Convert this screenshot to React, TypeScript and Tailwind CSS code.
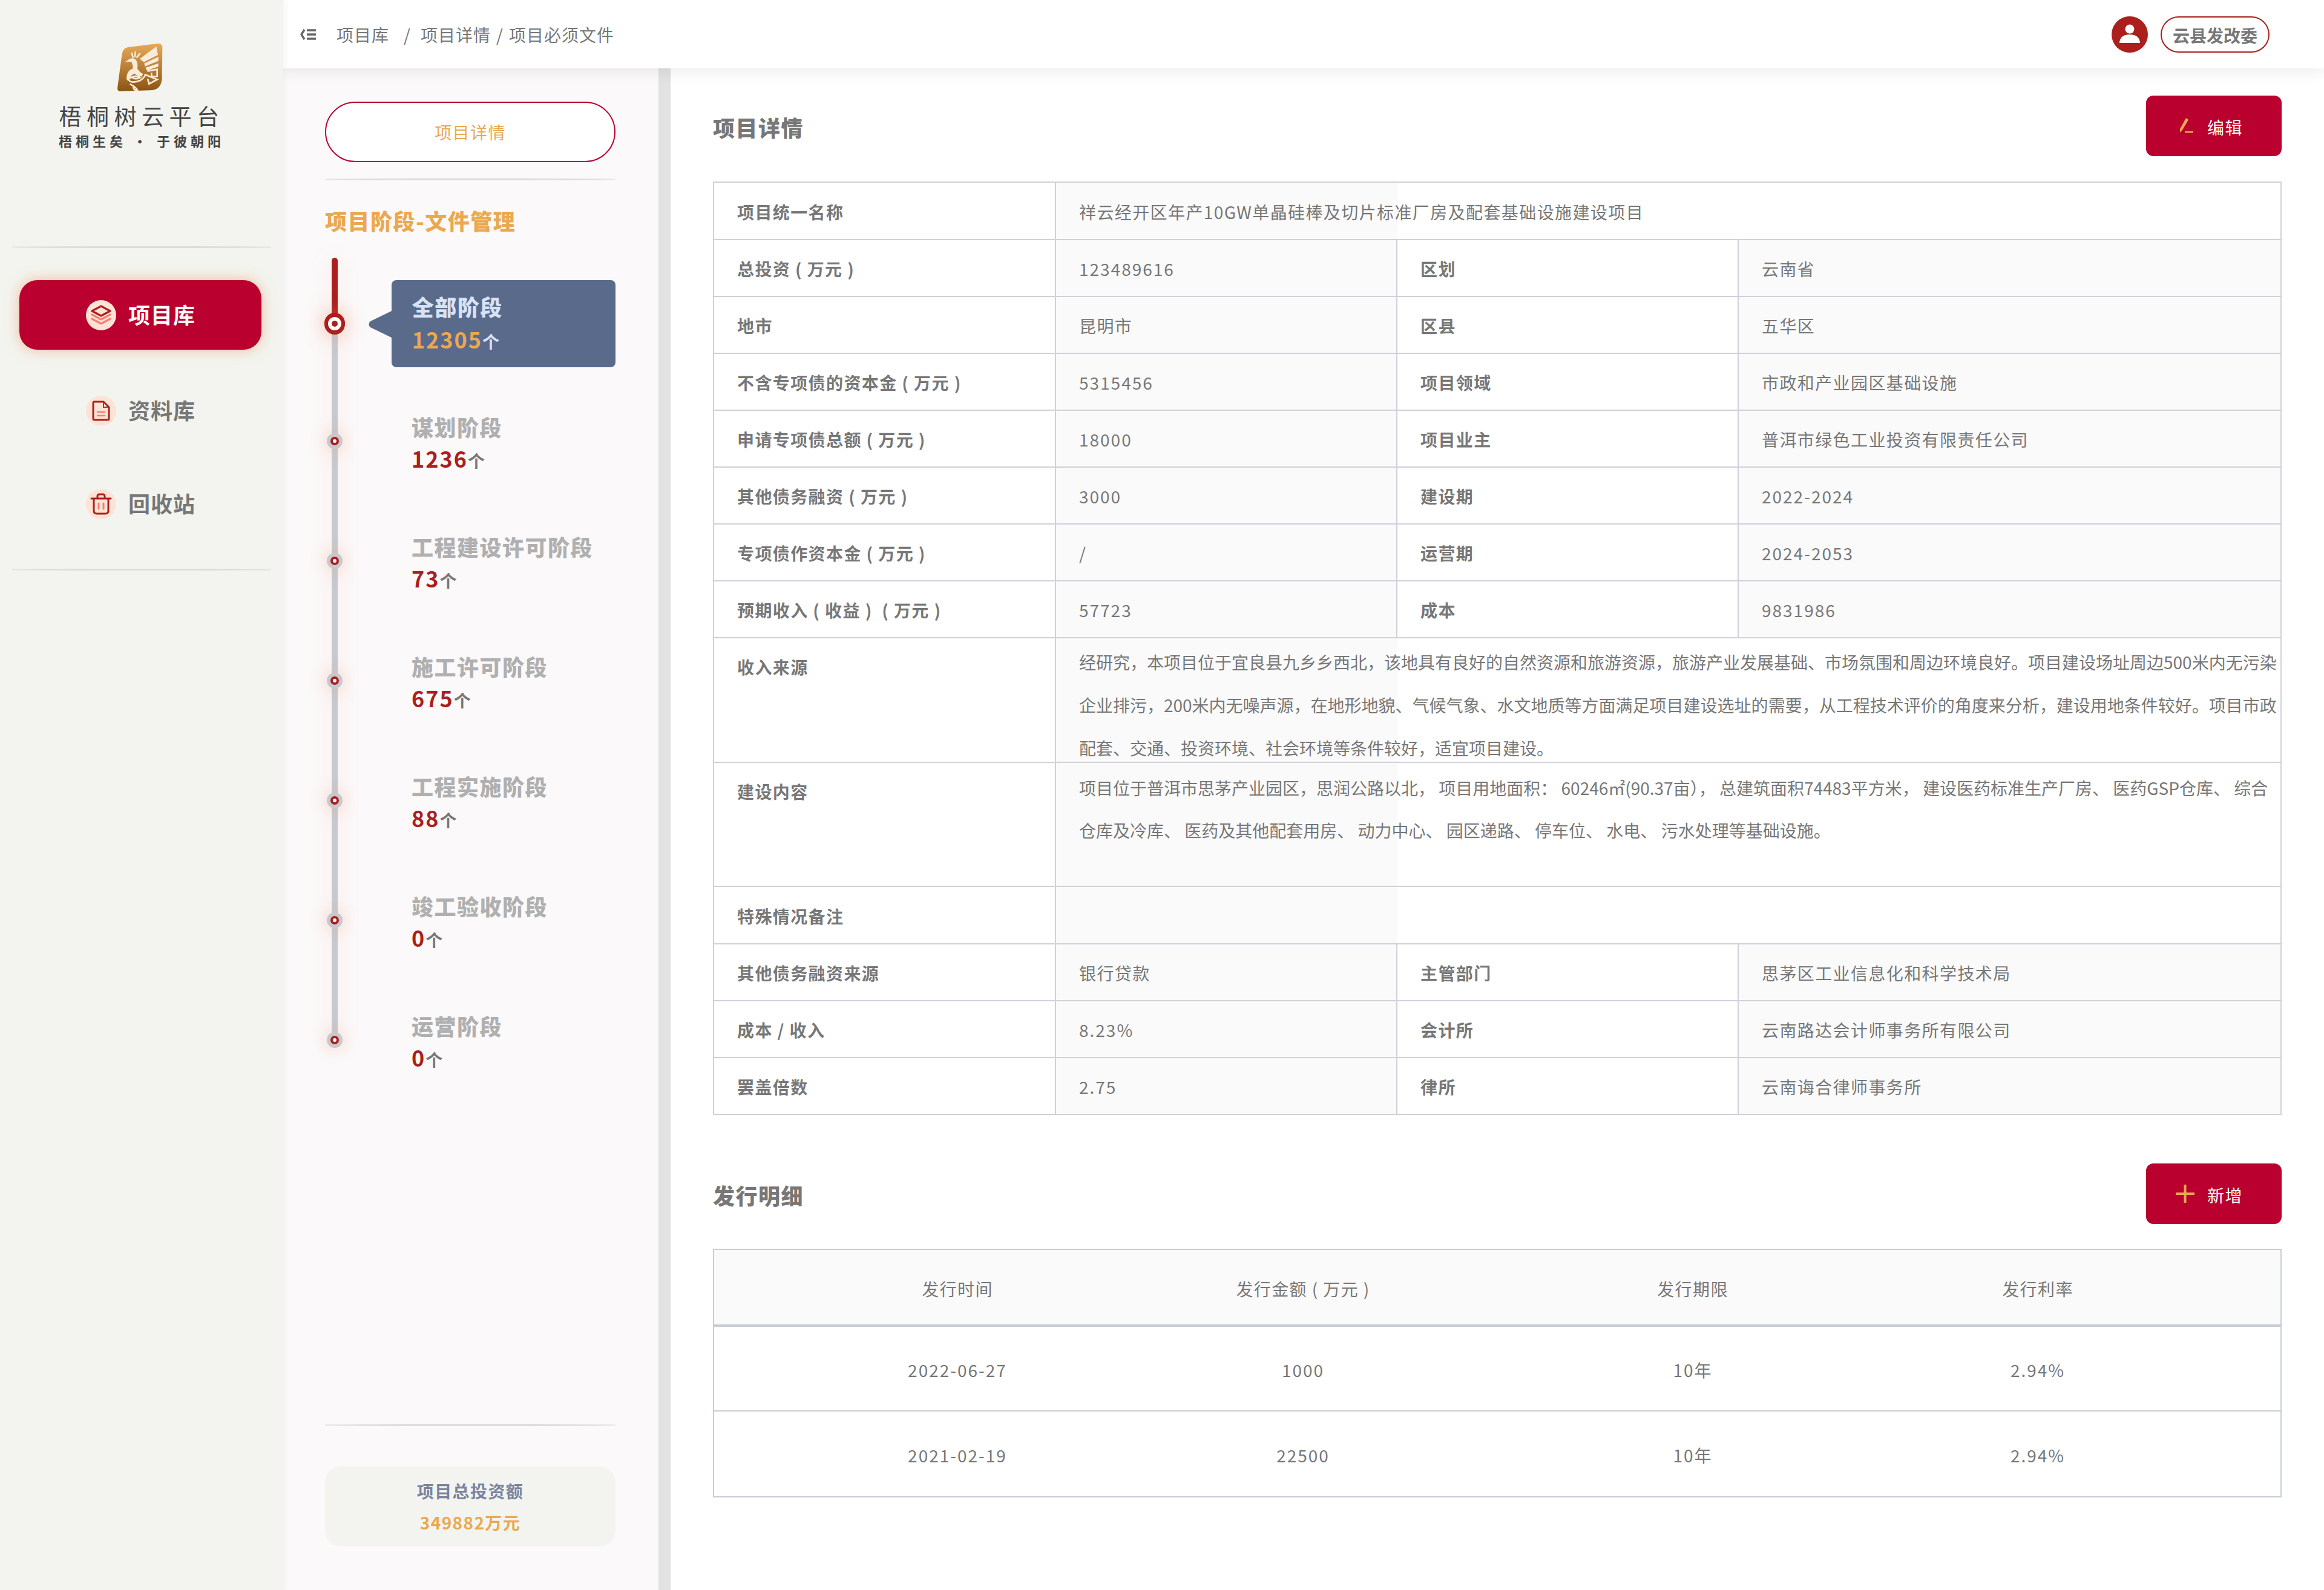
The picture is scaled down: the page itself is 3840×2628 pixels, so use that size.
import React from "react";

const INFO_ROWS: [string, string, string, string][] = [
  ["总投资 ( 万元 )", "123489616", "区划", "云南省"],
  ["地市", "昆明市", "区县", "五华区"],
  ["不含专项债的资本金 ( 万元 )", "5315456", "项目领域", "市政和产业园区基础设施"],
  ["申请专项债总额 ( 万元 )", "18000", "项目业主", "普洱市绿色工业投资有限责任公司"],
  ["其他债务融资 ( 万元 )", "3000", "建设期", "2022-2024"],
  ["专项债作资本金 ( 万元 )", "/", "运营期", "2024-2053"],
  ["预期收入 ( 收益 ) \u00a0( 万元 )", "57723", "成本", "9831986"],
];

const BOTTOM_ROWS: [string, string, string, string][] = [
  ["其他债务融资来源", "银行贷款", "主管部门", "思茅区工业信息化和科学技术局"],
  ["成本 / 收入", "8.23%", "会计所", "云南路达会计师事务所有限公司"],
  ["罢盖倍数", "2.75", "律所", "云南诲合律师事务所"],
];

const INCOME_LINES = [
  "经研究，本项目位于宜良县九乡乡西北，该地具有良好的自然资源和旅游资源，旅游产业发展基础、市场氛围和周边环境良好。项目建设场址周边500米内无污染",
  "企业排污，200米内无噪声源，在地形地貌、气候气象、水文地质等方面满足项目建设选址的需要，从工程技术评价的角度来分析，建设用地条件较好。项目市政",
  "配套、交通、投资环境、社会环境等条件较好，适宜项目建设。",
];

const BUILD_LINES = [
  "项目位于普洱市思茅产业园区，思润公路以北， 项目用地面积： 60246㎡(90.37亩）， 总建筑面积74483平方米， 建设医药标准生产厂房、 医药GSP仓库、 综合",
  "仓库及冷库、 医药及其他配套用房、 动力中心、 园区递路、 停车位、 水电、 污水处理等基础设施。",
];

const STAGES = [
  { name: "谋划阶段", count: "1236" },
  { name: "工程建设许可阶段", count: "73" },
  { name: "施工许可阶段", count: "675" },
  { name: "工程实施阶段", count: "88" },
  { name: "竣工验收阶段", count: "0" },
  { name: "运营阶段", count: "0" },
];

const ISSUES = [
  ["2022-06-27", "1000", "10年", "2.94%"],
  ["2021-02-19", "22500", "10年", "2.94%"],
];

const issueGrid = "grid grid-cols-[570px_572px_716px_424px] pl-[117px] pt-1 items-center text-center";
const labelCell = "border-2 border-[#cfd1da] pl-[38px] pr-2 font-bold text-[#777]";
const valueCell = "border-2 border-[#cfd1da] pl-[38px] pr-2 text-[#777]";
// the grey of the second column carries on through the rows that span to the right edge
const spanCell = "bg-[linear-gradient(to_right,#fafafa_564px,transparent_564px)]";

function numeric(value: string) {
  return /^[\d/.%-]+$/.test(value) ? "tracking-[2px]" : "";
}

function Divider({ className = "" }: { className?: string }) {
  return <div className={`h-[3px] bg-[radial-gradient(ellipse_at_center,#dcdcdc_55%,transparent_100%)] ${className}`} />;
}

function Logo() {
  return (
    <svg viewBox="0 0 300 300" className="w-[100px] h-[100px]">
      <defs>
        <linearGradient id="logoFill" x1="0" y1="0" x2="0" y2="1">
          <stop offset="0" stopColor="#e7aa58" />
          <stop offset="1" stopColor="#8c5415" />
        </linearGradient>
      </defs>
      <path d="M92 54 L240 36 Q262 34 262 56 L260 205 Q258 268 200 268 L52 272 Q36 272 40 250 L62 86 Q66 58 92 54Z" fill="url(#logoFill)" />
      <g fill="#f8ecd8">
        <path d="M76 128 L100 112 Q118 104 130 116 Q142 132 138 160 Q150 180 166 186 L160 200 Q130 196 116 178 Q118 150 110 128 Q98 124 76 128Z" />
        <path d="M150 112 L232 50 L240 92 L170 128Z" />
        <path d="M172 134 L242 102 L242 122 L176 150Z" />
        <path d="M178 156 L242 134 L242 150 L186 170Z" />
        <path d="M84 212 Q84 170 116 160 L124 186 Q104 192 100 214 Q92 226 84 212Z" />
      </g>
      <g fill="none" stroke="#f8ecd8" strokeWidth="8" strokeLinecap="round">
        <path d="M116 104 L110 84" />
        <path d="M126 100 L128 78" />
        <path d="M136 104 L150 86" />
        <path d="M190 172 L236 164 L236 198 L208 200 L208 184" />
        <path d="M176 190 L236 214 L196 236 L190 214" />
        <path d="M94 216 Q110 236 150 220 Q170 208 178 192" />
        <path d="M104 206 Q130 190 152 204 Q130 216 116 206" />
        <path d="M104 238 Q130 252 138 266 Q122 270 118 254" />
      </g>
    </svg>
  );
}

function LayersIcon() {
  return (
    <svg viewBox="0 0 50 50" className="w-[50px] h-[50px]" fill="none">
      <path d="M25 10 L40 18 L25 26 L10 18Z" stroke="#ab1f1c" strokeWidth="3.2" strokeLinejoin="round" />
      <path d="M10 24 L25 32 L40 24" stroke="#f47f76" strokeWidth="3.2" strokeLinecap="round" strokeLinejoin="round" />
      <path d="M10 31 L25 39 L40 31" stroke="#f47f76" strokeWidth="3.2" strokeLinecap="round" strokeLinejoin="round" />
    </svg>
  );
}

function FileIcon() {
  return (
    <svg viewBox="0 0 50 50" className="w-[50px] h-[50px]" fill="none">
      <path d="M14 10 H29 L38 19 V38 Q38 40 36 40 H14 Q12 40 12 38 V12 Q12 10 14 10Z" stroke="#ab1f1c" strokeWidth="3" strokeLinejoin="round" />
      <path d="M28 10 V20 H38Z" fill="#ab1f1c" opacity="0.9" />
      <path d="M30 13 V18 H35Z" fill="#fde3d5" />
      <path d="M19 27 H31 M19 33 H31" stroke="#f47f76" strokeWidth="2.6" strokeLinecap="round" />
    </svg>
  );
}

function TrashIcon() {
  return (
    <svg viewBox="0 0 50 50" className="w-[50px] h-[50px]" fill="none">
      <path d="M9 16 H41" stroke="#ab1f1c" strokeWidth="3" strokeLinecap="round" />
      <path d="M19 16 V12 Q19 9 22 9 H28 Q31 9 31 12 V16" stroke="#ab1f1c" strokeWidth="3" />
      <path d="M13 16 V36 Q13 41 18 41 H32 Q37 41 37 36 V16" stroke="#ab1f1c" strokeWidth="3" />
      <path d="M21 24 V33 M29 24 V33" stroke="#f47f76" strokeWidth="3" strokeLinecap="round" />
    </svg>
  );
}

function NavItem({ label, icon, active }: { label: string; icon: React.ReactNode; active?: boolean }) {
  return (
    <div
      className={`w-[400px] h-[115px] ml-8 flex items-center pl-[110px] rounded-[30px] ${
        active ? "bg-[#b9002e] shadow-[0_0_22px_rgba(238,140,90,0.55)]" : ""
      }`}
    >
      <div className="w-[50px] h-[50px] rounded-full bg-[#fde3d5] flex items-center justify-center">{icon}</div>
      <span className={`ml-5 -mt-1 text-[36px] tracking-[1px] font-bold ${active ? "text-white" : "text-[#777]"}`}>{label}</span>
    </div>
  );
}

function SmallDot() {
  return (
    <div className="w-[26px] h-[26px] rounded-full bg-[#c6c9cf] flex items-center justify-center shadow-[0_0_28px_rgba(240,140,90,0.4)]">
      <div className="w-[14px] h-[14px] rounded-full border-[4px] border-[#ab1f1c] bg-white" />
    </div>
  );
}

function Sidebar() {
  return (
    <aside className="w-[468px] shrink-0 bg-[#f3f4ef] flex flex-col relative z-20 shadow-[4px_0_10px_rgba(0,0,0,0.04)]">
      <div className="h-[72px] shrink-0" />
      <div className="h-[80px] flex justify-center -mt-[12px] mb-[24px] pr-[6px]">
        <Logo />
      </div>
      <div className="text-center text-[37px] leading-[50px] tracking-[8.5px] mt-[2px] text-[#444] font-normal whitespace-nowrap">梧桐树云平台</div>
      <div className="text-center text-[22px] leading-[34px] tracking-[6px] text-[#444] font-bold whitespace-nowrap -mt-[1px]">梧桐生矣 · 于彼朝阳</div>
      <Divider className="mt-[158px] mx-5" />
      <div className="mt-[53px]">
        <NavItem label="项目库" icon={<LayersIcon />} active />
      </div>
      <div className="mt-[43px]">
        <NavItem label="资料库" icon={<FileIcon />} />
      </div>
      <div className="mt-[39px]">
        <NavItem label="回收站" icon={<TrashIcon />} />
      </div>
      <Divider className="mt-[50px] mx-5" />
    </aside>
  );
}

function Header() {
  return (
    <header className="h-[113px] shrink-0 bg-white flex items-center relative z-10 pl-[28px] pr-[90px] shadow-[0_4px_24px_rgba(0,0,0,0.09)]">
      <svg viewBox="0 0 26 20" className="w-[26px] h-[20px]" fill="none" stroke="#666" strokeWidth="3.4">
        <path d="M7 2 L2 10 L7 18" strokeLinejoin="round" />
        <path d="M11 3 H26 M11 10 H26 M11 17 H26" />
      </svg>
      <div className="ml-[34px] flex items-center text-[28px] tracking-[1px] text-[#777] whitespace-nowrap">
        <span>项目库</span>
        <span className="ml-[24px]">/</span>
        <span className="ml-[16px]">项目详情</span>
        <span className="ml-[9px]">/</span>
        <span className="ml-[9px]">项目必须文件</span>
      </div>
      <div className="ml-auto flex items-center">
        <div className="w-[60px] h-[60px] rounded-full bg-[#ab1f1c] flex items-center justify-center">
          <svg viewBox="0 0 60 60" className="w-[60px] h-[60px]" fill="#fff">
            <circle cx="30" cy="21" r="7.5" />
            <path d="M13 44 Q14 30 30 30 Q46 30 47 44Z" />
          </svg>
        </div>
        <div className="ml-[21px] w-[180px] h-[60px] pt-[3px] rounded-full border-2 border-[#ab1f1c] flex items-center justify-center text-[28px] font-bold text-[#777] whitespace-nowrap">
          云县发改委
        </div>
      </div>
    </header>
  );
}

function StagePanel() {
  return (
    <div className="w-[640px] shrink-0 bg-[#fbf9fa] border-r-[20px] border-[#e2e2e2] pl-[69px] pr-[71px] pt-[55px] pb-[72px] flex flex-col">
      <div className="w-[480px] h-[100px] rounded-full border-2 border-[#b9002e] bg-white flex items-center justify-center text-[28px] tracking-[1.4px] text-[#eba850]">
        项目详情
      </div>
      <Divider className="mt-[27px]" />
      <div className="mt-[41px] h-[50px] leading-[50px] text-[36px] tracking-[1.5px] font-black text-[#eba850] whitespace-nowrap">项目阶段-文件管理</div>

      <div className="relative mt-[37px] pt-[14px]">
        {/* rail behind the dots */}
        <div className="absolute left-[11px] top-0 w-[10px] h-[1296px] rounded-full bg-[#c6c9cf] shadow-[0_0_36px_rgba(240,150,100,0.2)]" />
        <div className="absolute left-[11px] top-0 w-[10px] h-[110px] rounded-t-full bg-[#ab1f1c]" />

        <div className="relative h-[190px] flex items-center">
          <div className="w-[34px] h-[36px] rounded-full bg-[#ab1f1c] flex items-center justify-center shadow-[0_0_32px_rgba(240,130,80,0.55)] -ml-px">
            <div className="w-[22px] h-[22px] rounded-full bg-white flex items-center justify-center">
              <div className="w-[10px] h-[10px] rounded-full bg-[#ab1f1c]" />
            </div>
          </div>
          <div className="relative ml-[77px] w-[372px] h-[144px] rounded-lg bg-[#5a6a8b] pl-[34px] pt-[14px]">
            <svg viewBox="0 0 42 50" className="absolute -left-[40px] top-[48px] w-[42px] h-[50px]" fill="#5a6a8b">
              <path d="M42 2 L5 20 Q0 25 5 30 L42 48Z" />
            </svg>
            <div className="text-[36px] leading-[58px] tracking-[1.5px] font-black text-[#d7e2f6] whitespace-nowrap">全部阶段</div>
            <div className="leading-[50px] whitespace-nowrap">
              <span className="text-[36px] tracking-[2px] font-bold text-[#eba850]">12305</span>
              <span className="text-[28px] font-bold text-[#d7e2f6]">个</span>
            </div>
          </div>
        </div>

        {STAGES.map((stage) => (
          <div key={stage.name} className="relative h-[198px] flex items-center">
            <div className="w-[34px] flex justify-center -ml-px">
              <SmallDot />
            </div>
            <div className="ml-[110px] pt-[12px]">
              <div className="text-[36px] leading-[52px] tracking-[1.5px] font-black text-[#b0b0b0] whitespace-nowrap">{stage.name}</div>
              <div className="leading-[52px] whitespace-nowrap">
                <span className="text-[36px] tracking-[2px] font-bold text-[#ab1f1c]">{stage.count}</span>
                <span className="text-[28px] font-bold text-[#777]">个</span>
              </div>
            </div>
          </div>
        ))}
      </div>

      <div className="mt-auto">
        <Divider />
        <div className="mt-[67px] h-[132px] rounded-[26px] bg-[#f3f4ef] flex flex-col items-center justify-center">
          <div className="text-[28px] leading-[52px] font-bold tracking-[1.4px] text-[#7a839e]">项目总投资额</div>
          <div className="text-[28px] leading-[52px] font-bold tracking-[1.4px] text-[#eba850]">349882万元</div>
        </div>
      </div>
    </div>
  );
}

function SectionHead({ title, action, icon }: { title: string; action: string; icon: React.ReactNode }) {
  return (
    <div className="flex items-center justify-between">
      <div className="pt-[3px] text-[36px] tracking-[1.5px] font-black text-[#777]">{title}</div>
      <div className="w-[224px] h-[100px] rounded-xl bg-[#b9002e] flex items-center text-white text-[28px] tracking-[1.4px]">
        <div className="w-[101px] pr-[21px] flex justify-end">{icon}</div>
        <span className="pt-[3px]">{action}</span>
      </div>
    </div>
  );
}

function InfoTable() {
  return (
    <table className="w-[2592px] table-fixed border-collapse border-2 border-[#cfd1da] text-[28px] tracking-[1.4px]">
      <colgroup>
        <col className="w-[565px]" />
        <col className="w-[564px]" />
        <col className="w-[564px]" />
        <col />
      </colgroup>
      <tbody>
        <tr className="h-[95px]">
          <td className={`${labelCell} pt-[2px]`}>项目统一名称</td>
          <td className={`${valueCell} pt-[2px] ${spanCell}`} colSpan={3}>祥云经开区年产10GW单晶硅棒及切片标准厂房及配套基础设施建设项目</td>
        </tr>
        {INFO_ROWS.map((row) => (
          <tr key={row[0]} className="h-[94px]">
            <td className={`${labelCell} pt-[2px]`}>{row[0]}</td>
            <td className={`${valueCell} pt-[2px] bg-[#fafafa] ${numeric(row[1])}`}>{row[1]}</td>
            <td className={`${labelCell} pt-[2px]`}>{row[2]}</td>
            <td className={`${valueCell} pt-[2px] bg-[#fafafa] ${numeric(row[3])}`}>{row[3]}</td>
          </tr>
        ))}
        <tr>
          <td className={`${labelCell} align-top`}>
            <div className="h-[204px] pt-[27px] leading-[40px]">收入来源</div>
          </td>
          <td className={`border-2 border-[#cfd1da] pl-[38px] text-[#777] align-top tracking-normal ${spanCell}`} colSpan={3}>
            <div className="h-[204px] overflow-hidden pt-[4px] leading-[71px]">
              {INCOME_LINES.map((line) => (
                <div key={line} className="whitespace-nowrap">{line}</div>
              ))}
            </div>
          </td>
        </tr>
        <tr>
          <td className={`${labelCell} align-top`}>
            <div className="h-[203px] pt-[27px] leading-[40px]">建设内容</div>
          </td>
          <td className={`border-2 border-[#cfd1da] pl-[38px] text-[#777] align-top tracking-normal ${spanCell}`} colSpan={3}>
            <div className="h-[203px] overflow-hidden pt-[6px] leading-[70px]">
              {BUILD_LINES.map((line) => (
                <div key={line} className="whitespace-nowrap">{line}</div>
              ))}
            </div>
          </td>
        </tr>
        <tr className="h-[95px]">
          <td className={`${labelCell} pt-[2px]`}>特殊情况备注</td>
          <td className={`${valueCell} ${spanCell}`} colSpan={3} />
        </tr>
        {BOTTOM_ROWS.map((row) => (
          <tr key={row[0]} className="h-[94px]">
            <td className={`${labelCell} pt-[2px]`}>{row[0]}</td>
            <td className={`${valueCell} pt-[2px] bg-[#fafafa] ${numeric(row[1])}`}>{row[1]}</td>
            <td className={`${labelCell} pt-[2px]`}>{row[2]}</td>
            <td className={`${valueCell} pt-[2px] bg-[#fafafa]`}>{row[3]}</td>
          </tr>
        ))}
      </tbody>
    </table>
  );
}

function IssueTable() {
  return (
    <div className="w-[2592px] border-2 border-[#c8ccd4] text-[28px] tracking-[1.4px] text-[#777]">
      <div className={`${issueGrid} h-[127px] bg-[#fafafa] border-b-4 border-[#c8ccd4]`}>
        <span>发行时间</span>
        <span>发行金额 ( 万元 )</span>
        <span>发行期限</span>
        <span>发行利率</span>
      </div>
      {ISSUES.map((row, i) => (
        <div key={row[0]} className={`${issueGrid} tracking-[2px] ${i === 0 ? "h-[140px] border-b-2 border-[#c8ccd4]" : "h-[140px]"}`}>
          {row.map((value, j) => (
            <span key={j}>{value}</span>
          ))}
        </div>
      ))}
    </div>
  );
}

export default function App() {
  return (
    <div className="w-[3840px] h-[2628px] flex overflow-hidden bg-white font-['Noto_Sans_CJK_SC','Noto_Sans',sans-serif]">
      <Sidebar />
      <div className="w-[3372px] flex flex-col">
        <Header />
        <div className="flex flex-1 min-h-0">
          <StagePanel />
          <main className="flex-1 pl-[70px] pr-[70px] pt-[45px]">
            <SectionHead
              title="项目详情"
              action="编辑"
              icon={
                <svg viewBox="0 0 24 26" className="w-[24px] h-[26px]" fill="#eba850">
                  <path d="M10 0 L14 3 L4 20 L0 24 L0 18Z" />
                  <rect x="8" y="22" width="14" height="2.5" />
                </svg>
              }
            />
            <div className="mt-[42px]">
              <InfoTable />
            </div>
            <div className="mt-[80px]">
              <SectionHead
                title="发行明细"
                action="新增"
                icon={
                  <svg viewBox="0 0 31 30" className="w-[31px] h-[30px]" fill="#eba850">
                    <rect x="13.5" y="0" width="4" height="30" />
                    <rect x="0" y="13" width="31" height="4" />
                  </svg>
                }
              />
            </div>
            <div className="mt-[41px]">
              <IssueTable />
            </div>
          </main>
        </div>
      </div>
    </div>
  );
}
